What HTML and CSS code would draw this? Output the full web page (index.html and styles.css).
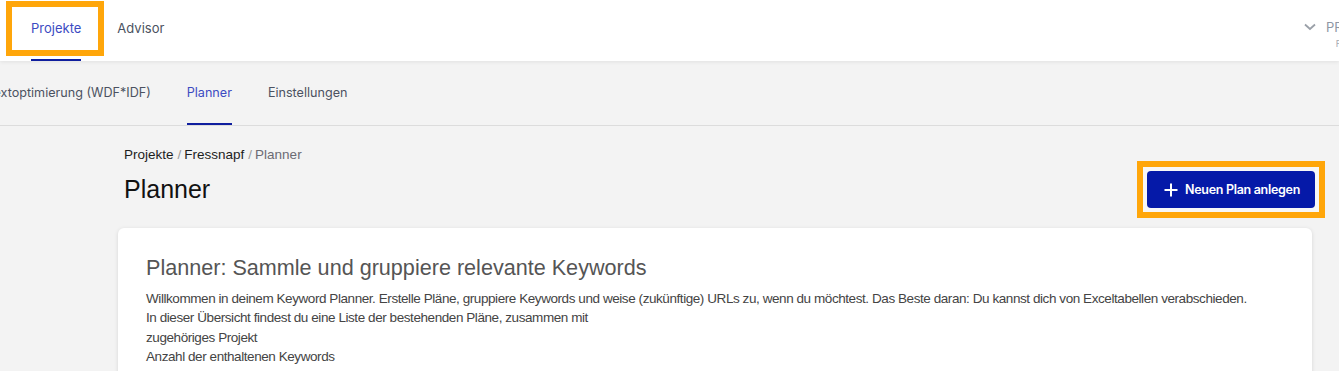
FILE: index.html
```html
<!DOCTYPE html>
<html lang="de">
<head>
<meta charset="utf-8">
<title>Planner</title>
<link rel="stylesheet" href="styles.css">
</head>
<body>
<header class="topbar">
  <nav class="mainnav">
    <a class="mainnav-item active highlight">Projekte</a>
    <a class="mainnav-item">Advisor</a>
  </nav>
  <div class="user">
    <svg class="chev" width="12" height="8" viewBox="0 0 12 8"><path d="M1 1.5 L6 6 L11 1.5" fill="none" stroke="#9aa0a8" stroke-width="1.8"/></svg>
    <div class="user-text">
      <span class="user-name">PR</span>
      <span class="user-sub">F</span>
    </div>
  </div>
</header>
<nav class="subnav">
  <a class="subnav-item cut">extoptimierung (WDF*IDF)</a>
  <a class="subnav-item active">Planner</a>
  <a class="subnav-item">Einstellungen</a>
</nav>
<main class="content">
  <div class="breadcrumb">
    <a>Projekte</a><span class="sep">/</span><a>Fressnapf</a><span class="sep">/</span><span class="current">Planner</span>
  </div>
  <div class="titlerow">
    <h1 class="title">Planner</h1>
    <div class="btn-highlight">
      <button class="btn-primary"><svg width="14" height="14" viewBox="0 0 14 14"><path d="M7 0.5 V13.5 M0.5 7 H13.5" stroke="#fff" stroke-width="2"/></svg><span>Neuen Plan anlegen</span></button>
    </div>
  </div>
  <section class="card">
    <h2 class="card-title">Planner: Sammle und gruppiere relevante Keywords</h2>
    <p class="card-text">Willkommen in deinem Keyword Planner. Erstelle Pläne, gruppiere Keywords und weise (zukünftige) URLs zu, wenn du möchtest. Das Beste daran: Du kannst dich von Exceltabellen verabschieden.</p>
    <p class="card-text">In dieser Übersicht findest du eine Liste der bestehenden Pläne, zusammen mit</p>
    <p class="card-text">zugehöriges Projekt</p>
    <p class="card-text">Anzahl der enthaltenen Keywords</p>
  </section>
</main>
</body>
</html>
```

FILE: styles.css
```css
*, *::before, *::after { box-sizing: border-box; }
html, body { margin: 0; padding: 0; }
body {
  background: #f3f3f3;
  font-family: "Liberation Sans", Arial, sans-serif;
  width: 1339px;
  height: 371px;
  overflow: hidden;
}
a { cursor: pointer; }

.topbar {
  position: relative;
  z-index: 2;
  height: 61px;
  background: #fff;
  box-shadow: 0 1px 4px rgba(0,0,0,0.08);
  display: flex;
  justify-content: space-between;
  align-items: stretch;
}
.mainnav {
  display: flex;
  padding-left: 31px;
  gap: 36px;
}
.mainnav-item {
  font-family: Inter, "Noto Sans", sans-serif;
  font-size: 13px;
  color: #4b5261;
  display: flex;
  align-items: center;
  height: 61px;
  padding-bottom: 4px;
  position: relative;
  border-bottom: 2px solid transparent;
}
.mainnav-item.active {
  color: #3c4bc2;
  border-bottom-color: #0f1e9e;
}
.mainnav-item.highlight::before {
  content: "";
  position: absolute;
  left: -25px;
  right: -23px;
  top: 1px;
  height: 55px;
  border: 6px solid #ffa60a;
}
.user {
  display: flex;
  align-items: flex-start;
  gap: 10px;
  padding-top: 19px;
  margin-right: -12px;
}
.chev { margin-top: 4px; }
.user-text {
  display: flex;
  flex-direction: column;
  align-items: flex-end;
  font-family: Inter, "Noto Sans", sans-serif;
  width: 25px;
  overflow: hidden;
}
.user-name { font-size: 13px; color: #8f96a3; line-height: 16px; align-self: flex-start; }
.user-sub { font-size: 9px; color: #a5aab3; line-height: 12px; margin-top: 3px; margin-right: 10px; }

.subnav {
  height: 65px;
  display: flex;
  border-bottom: 1px solid #dcdcdc;
  gap: 36px;
}
.subnav-item {
  font-family: Inter, "Noto Sans", sans-serif;
  font-size: 12.6px;
  color: #4b5261;
  display: flex;
  align-items: center;
  height: 64px;
  padding-bottom: 0;
  border-bottom: 2px solid transparent;
}
.subnav-item.cut { margin-left: -6.5px; }
.subnav-item.active {
  color: #3c4bc2;
  border-bottom-color: #0f1e9e;
}

.content {
  padding: 20px 27px 0 118px;
}
.breadcrumb {
  padding-left: 6px;
  font-size: 13.5px;
  color: #1d1d1d;
  line-height: 17px;
}
.breadcrumb .sep { color: #9a9a9a; margin: 0 3px 0 4px; }
.breadcrumb .current { color: #6b6b73; }

.titlerow {
  display: flex;
  justify-content: space-between;
  align-items: flex-start;
  margin-top: -2px;
}
.title {
  margin: 14px 0 0 6px;
  font-size: 25px;
  font-weight: normal;
  color: #111;
  line-height: 28px;
}
.btn-highlight {
  border: 6px solid #ffa60a;
  padding: 4px;
  margin-right: -13px;
  background: #f7f7f7;
}
.btn-primary {
  display: flex;
  align-items: center;
  gap: 7px;
  width: 168px;
  height: 37px;
  padding: 0 0 0 17px;
  border: none;
  border-radius: 4px;
  background: #0519a8;
  color: #fff;
  font-family: Inter, "Noto Sans", sans-serif;
  font-size: 12.5px;
  font-weight: 600;
  letter-spacing: -0.3px;
}

.card {
  margin-top: 10px;
  background: #fff;
  border-radius: 6px;
  box-shadow: 0 1px 4px rgba(0,0,0,0.12);
  padding: 27px 28px 20px;
  height: 200px;
}
.card-title {
  margin: 0 0 8px;
  font-size: 21.6px;
  font-weight: normal;
  color: #555;
  line-height: 26px;
}
.card-text {
  margin: 0;
  font-size: 13.5px;
  letter-spacing: -0.43px;
  line-height: 19.3px;
  color: #444;
}
```
